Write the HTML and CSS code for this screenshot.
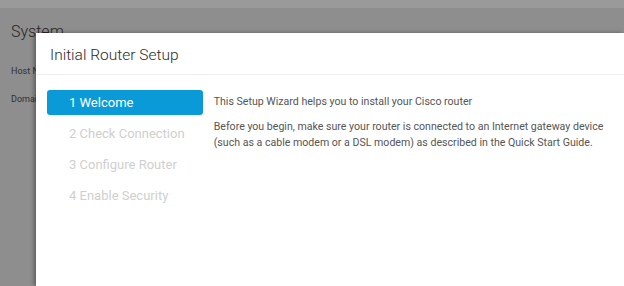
FILE: index.html
```html
<!DOCTYPE html>
<html lang="en">
<head>
    <meta charset="UTF-8">
    <title>Initial Router Setup</title>
    <link rel="stylesheet" href="styles.css">
</head>
<body>
    <div class="page">
        <div class="topbar"></div>
        <div class="system">
            <h2>System</h2>
            <p class="field">Host Name</p>
            <p class="field">Domain Name</p>
        </div>
    </div>
    <div class="modal">
        <div class="modal-header">Initial Router Setup</div>
        <div class="modal-body">
            <div class="steps">
                <div class="step active">1 Welcome</div>
                <div class="step">2 Check Connection</div>
                <div class="step">3 Configure Router</div>
                <div class="step">4 Enable Security</div>
            </div>
            <div class="step-content">
                <p>This Setup Wizard helps you to install your Cisco router</p>
                <p>Before you begin, make sure your router is connected to an Internet gateway device (such as a cable modem or a DSL modem) as described in the Quick Start Guide.</p>
            </div>
        </div>
    </div>
</body>
</html>
```
FILE: styles.css
```css
body {
    margin: 0;
    padding: 0;
    font-family: Roboto, "Liberation Sans", sans-serif;
    background-color: #8e8e8e;
    overflow: hidden;
    height: 286px;
}

.topbar {
    height: 8px;
    background-color: #9a9a9a;
}

.system {
    padding: 14px 11px;
}

.system h2 {
    margin: 0 0 25px;
    font-size: 16px;
    font-weight: 300;
    color: #262626;
}

.field {
    margin: 0 0 18px;
    font-size: 9px;
    color: #303030;
}

.modal {
    position: absolute;
    left: 36px;
    top: 33px;
    right: 0;
    bottom: 0;
    background-color: #fff;
    box-shadow: -2px 0 4px rgba(0, 0, 0, 0.35);
}

.modal-header {
    padding: 13px 14px 10px;
    font-size: 15.5px;
    font-weight: 300;
    color: #2b2b2b;
    border-bottom: 1px solid #eeeeee;
    height: 18px;
    line-height: 18px;
}

.modal-body {
    display: flex;
    padding: 15px 11px;
    gap: 11px;
}

.steps {
    width: 156px;
    display: flex;
    flex-direction: column;
    gap: 6px;
}

.step {
    height: 25px;
    line-height: 25px;
    padding-left: 22px;
    font-size: 13px;
    color: #cfcfcf;
    border-radius: 3px;
}

.step.active {
    background-color: #0a9ad7;
    color: #fff;
}

.step-content {
    padding-top: 4px;
    font-size: 10.6px;
    color: #555;
}

.step-content p {
    margin: 0 0 9px;
    line-height: 16px;
    max-width: 400px;
}
```
